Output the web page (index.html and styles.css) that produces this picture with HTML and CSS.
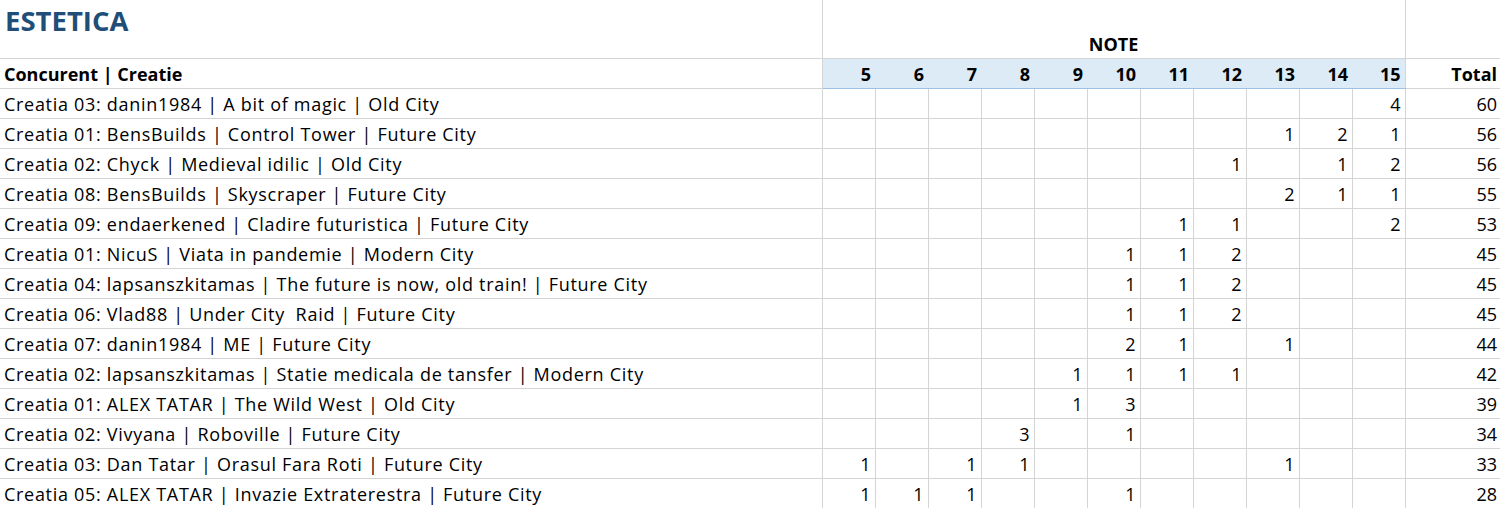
FILE: index.html
```html
<!DOCTYPE html>
<html>
<head>
<meta charset="utf-8">
<link rel="stylesheet" href="styles.css">
</head>
<body>
<table class="sheet">
<colgroup>
<col class="c-name">
<col class="c-n"><col class="c-n"><col class="c-n"><col class="c-n"><col class="c-n"><col class="c-n"><col class="c-n"><col class="c-n"><col class="c-n"><col class="c-n"><col class="c-n">
<col class="c-total">
</colgroup>
<thead>
<tr class="r-top">
<td class="title-cell"><span class="title">ESTETICA</span></td>
<td class="note-cell" colspan="11">NOTE</td>
<td class="blank-top"></td>
</tr>
<tr class="r-head">
<th class="h-name">Concurent | Creatie</th>
<th class="h-num">5</th><th class="h-num">6</th><th class="h-num">7</th><th class="h-num">8</th><th class="h-num">9</th><th class="h-num">10</th><th class="h-num">11</th><th class="h-num">12</th><th class="h-num">13</th><th class="h-num">14</th><th class="h-num">15</th>
<th class="h-total">Total</th>
</tr>
</thead>
<tbody>
<tr><td class="name">Creatia 03: danin1984 | A bit of magic | Old City</td><td></td><td></td><td></td><td></td><td></td><td></td><td></td><td></td><td></td><td></td><td>4</td><td class="total">60</td></tr>
<tr><td class="name">Creatia 01: BensBuilds | Control Tower | Future City</td><td></td><td></td><td></td><td></td><td></td><td></td><td></td><td></td><td>1</td><td>2</td><td>1</td><td class="total">56</td></tr>
<tr><td class="name">Creatia 02: Chyck | Medieval idilic | Old City</td><td></td><td></td><td></td><td></td><td></td><td></td><td></td><td>1</td><td></td><td>1</td><td>2</td><td class="total">56</td></tr>
<tr><td class="name">Creatia 08: BensBuilds | Skyscraper | Future City</td><td></td><td></td><td></td><td></td><td></td><td></td><td></td><td></td><td>2</td><td>1</td><td>1</td><td class="total">55</td></tr>
<tr><td class="name">Creatia 09: endaerkened | Cladire futuristica | Future City</td><td></td><td></td><td></td><td></td><td></td><td></td><td>1</td><td>1</td><td></td><td></td><td>2</td><td class="total">53</td></tr>
<tr><td class="name">Creatia 01: NicuS | Viata in pandemie | Modern City</td><td></td><td></td><td></td><td></td><td></td><td>1</td><td>1</td><td>2</td><td></td><td></td><td></td><td class="total">45</td></tr>
<tr><td class="name">Creatia 04: lapsanszkitamas | The future is now, old train! | Future City</td><td></td><td></td><td></td><td></td><td></td><td>1</td><td>1</td><td>2</td><td></td><td></td><td></td><td class="total">45</td></tr>
<tr><td class="name">Creatia 06: Vlad88 | Under City  Raid | Future City</td><td></td><td></td><td></td><td></td><td></td><td>1</td><td>1</td><td>2</td><td></td><td></td><td></td><td class="total">45</td></tr>
<tr><td class="name">Creatia 07: danin1984 | ME | Future City</td><td></td><td></td><td></td><td></td><td></td><td>2</td><td>1</td><td></td><td>1</td><td></td><td></td><td class="total">44</td></tr>
<tr><td class="name">Creatia 02: lapsanszkitamas | Statie medicala de tansfer | Modern City</td><td></td><td></td><td></td><td></td><td>1</td><td>1</td><td>1</td><td>1</td><td></td><td></td><td></td><td class="total">42</td></tr>
<tr><td class="name">Creatia 01: ALEX TATAR | The Wild West | Old City</td><td></td><td></td><td></td><td></td><td>1</td><td>3</td><td></td><td></td><td></td><td></td><td></td><td class="total">39</td></tr>
<tr><td class="name">Creatia 02: Vivyana | Roboville | Future City</td><td></td><td></td><td></td><td>3</td><td></td><td>1</td><td></td><td></td><td></td><td></td><td></td><td class="total">34</td></tr>
<tr><td class="name">Creatia 03: Dan Tatar | Orasul Fara Roti | Future City</td><td>1</td><td></td><td>1</td><td>1</td><td></td><td></td><td></td><td></td><td>1</td><td></td><td></td><td class="total">33</td></tr>
<tr><td class="name">Creatia 05: ALEX TATAR | Invazie Extraterestra | Future City</td><td>1</td><td>1</td><td>1</td><td></td><td></td><td>1</td><td></td><td></td><td></td><td></td><td></td><td class="total">28</td></tr>
</tbody>
</table>
</body>
</html>
```

FILE: styles.css
```css
html, body {
  margin: 0;
  padding: 0;
  background: #ffffff;
}

.sheet {
  width: 1500px;
  table-layout: fixed;
  border-collapse: collapse;
  font-family: "Open Sans", "Noto Sans", "Liberation Sans", sans-serif;
  font-size: 18px;
  color: #000000;
}

.c-name { width: 822px; }
.c-n { width: 53px; }
.c-total { width: 95px; }

.sheet td, .sheet th {
  padding: 0 4px 4px 4px;
  vertical-align: bottom;
  text-align: right;
  white-space: pre;
  overflow: hidden;
  line-height: 20px;
  border-right: 1px solid #d4d4d4;
  border-bottom: 1px solid #d4d4d4;
}

.sheet td.total, .sheet th.h-total, .sheet td.blank-top {
  border-right: none;
  padding-right: 3px;
}

.sheet tr { height: 30px; }
.sheet tr.r-top { height: 58px; }

.title-cell {
  text-align: left !important;
  vertical-align: top !important;
  padding: 4px 5px 0 !important;
}

.title {
  font-size: 27.5px;
  font-weight: 700;
  color: #1f4e79;
  line-height: 34px;
}

.note-cell {
  text-align: center !important;
  font-weight: 700;
}

.r-head th {
  font-weight: 700;
}

.h-name {
  text-align: left !important;
}

.sheet th.h-num {
  background: #ddebf7;
  border-right: none;
  border-bottom: 1px solid #9bc2e6;
}

.sheet th.h-num:nth-child(12) {
  border-right: 1px solid #d4d4d4;
}

.sheet td.name {
  text-align: left;
  padding-left: 4px;
  letter-spacing: 0.7px;
}
```
